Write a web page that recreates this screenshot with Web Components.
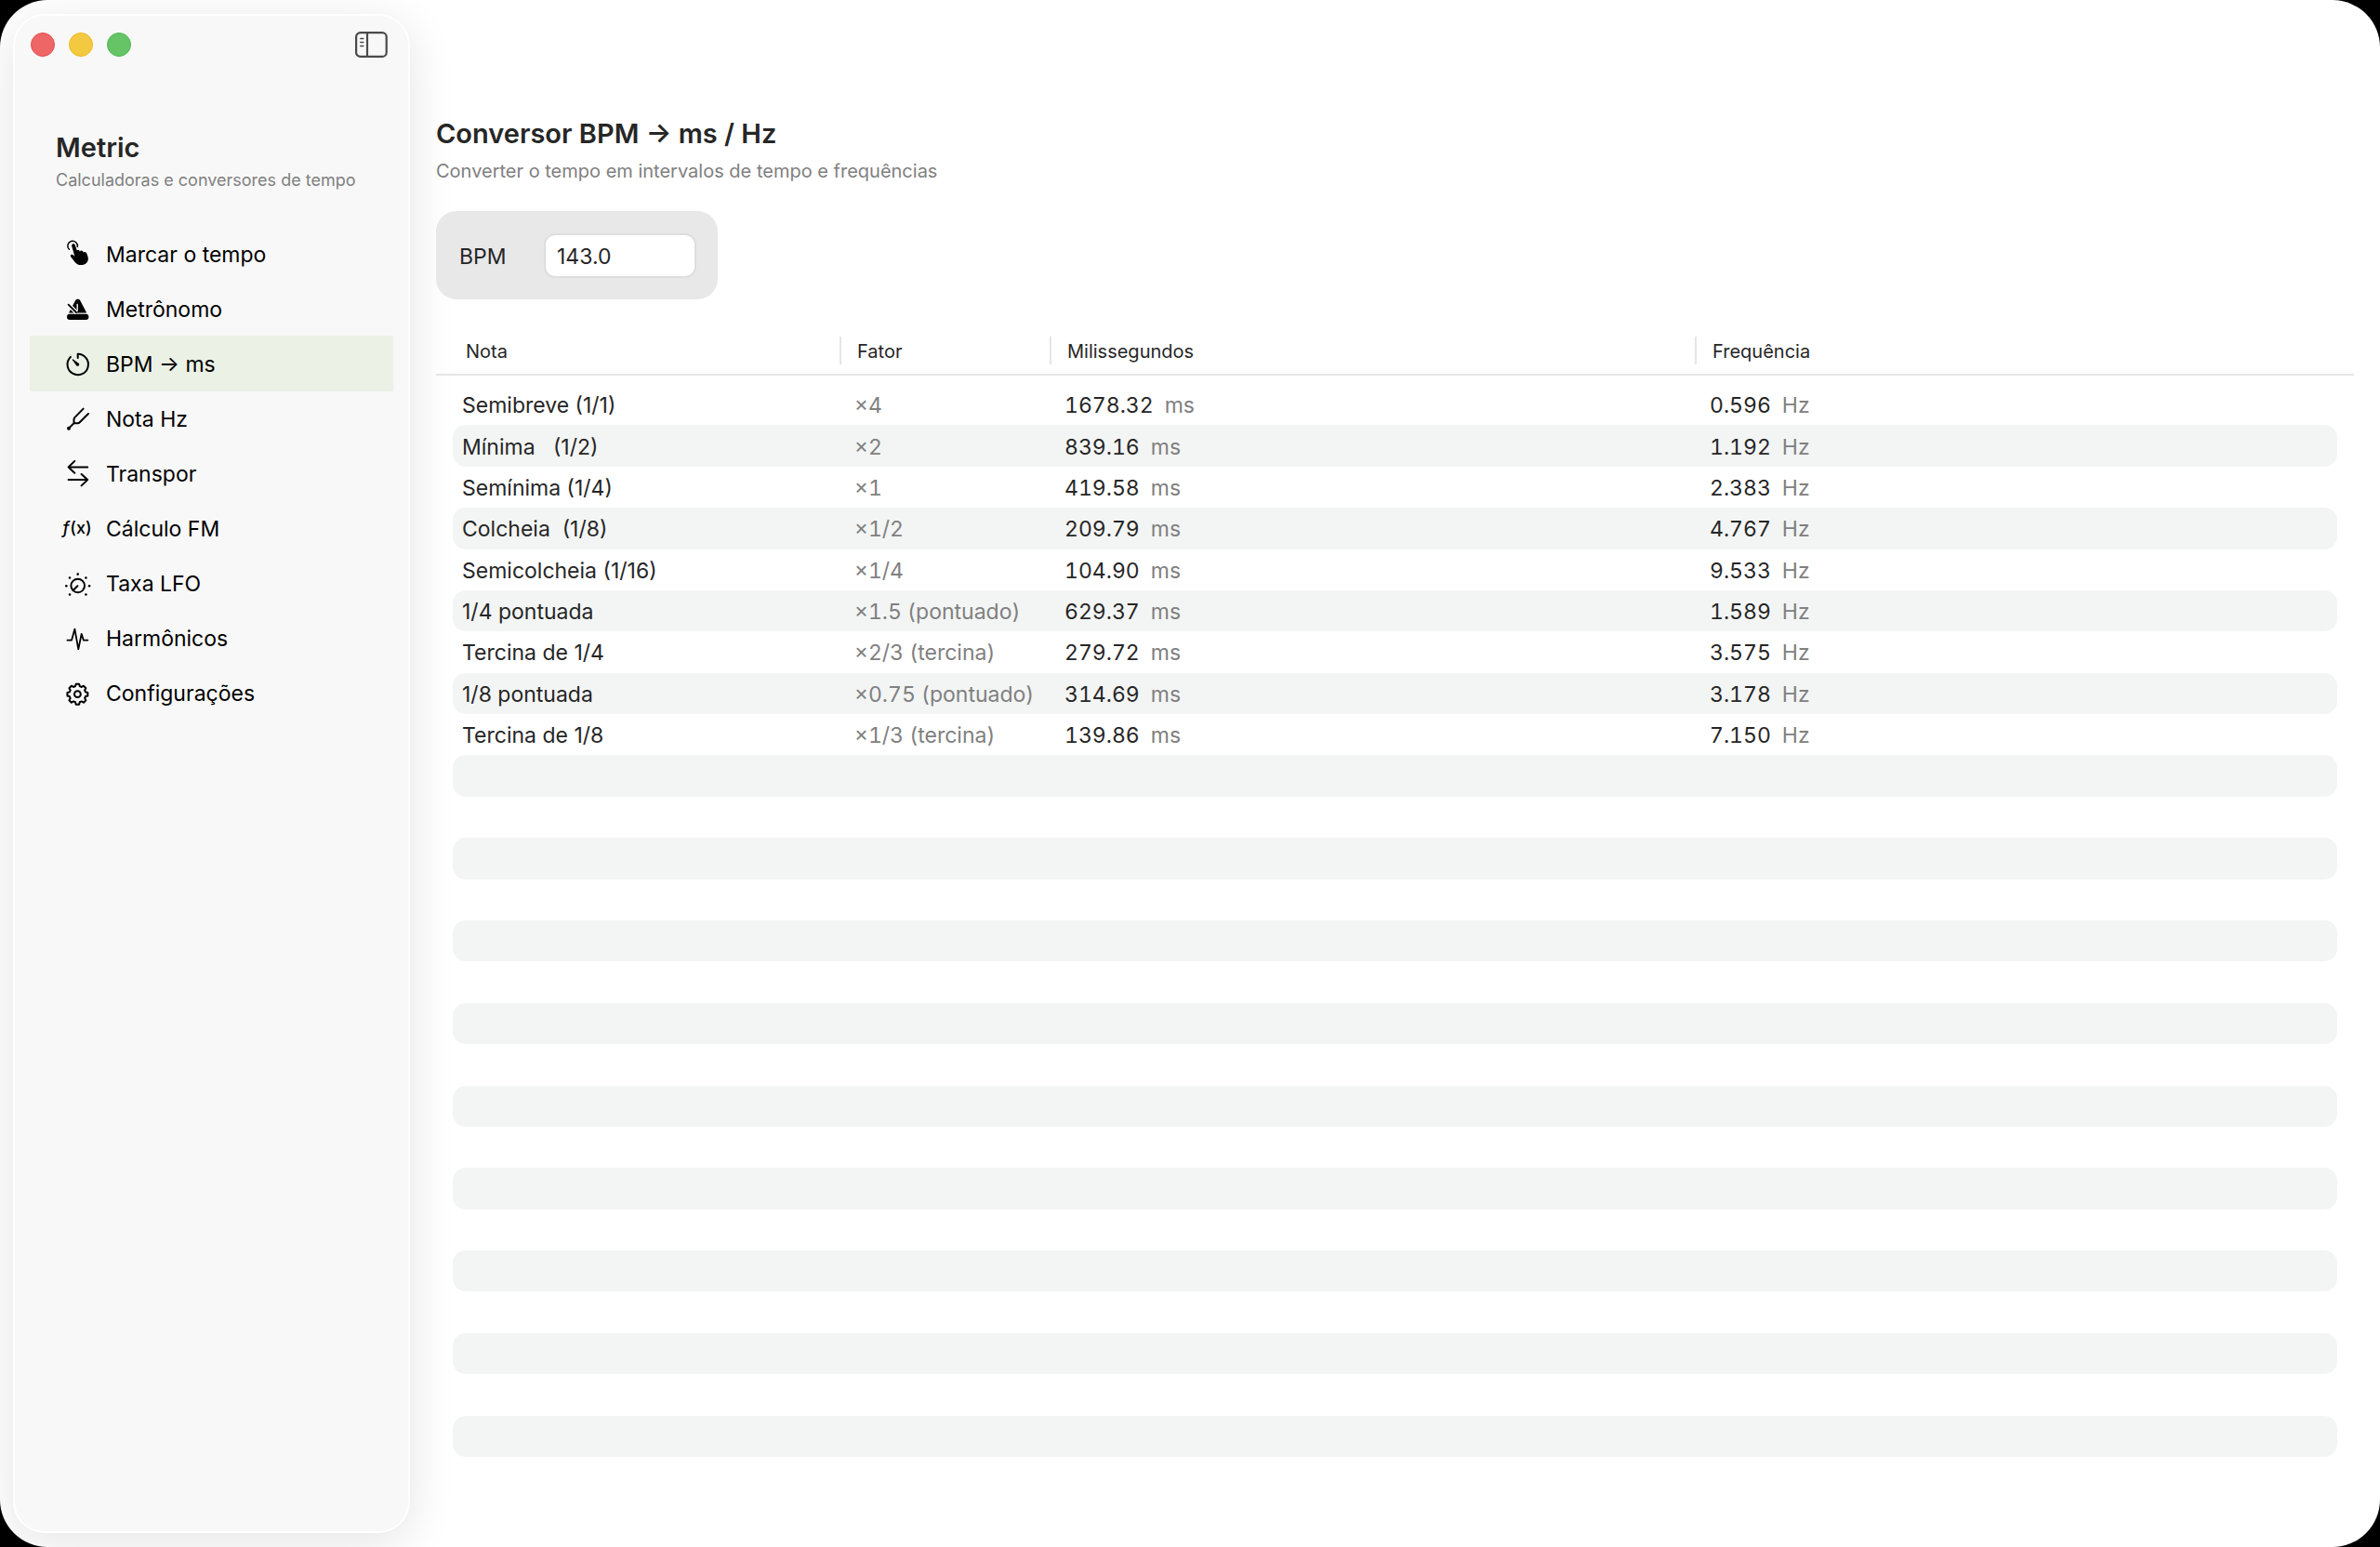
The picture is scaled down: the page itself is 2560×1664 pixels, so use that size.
<!DOCTYPE html>
<html lang="pt-BR">
<head>
<meta charset="utf-8">
<title>Metric</title>
<style>
  html, body { height: 100%; margin: 0; background: #000; }
  body { font-family: Inter, "Liberation Sans", sans-serif; font-size: 23px; color: #262626; }
</style>
</head>
<body>
<metric-app>
  <metric-sidebar slot="sidebar">
    <page-heading slot="heading" compact>
      Metric
      <span slot="subtitle">Calculadoras e conversores de tempo</span>
    </page-heading>
    <nav-item icon="tap">Marcar o tempo</nav-item>
    <nav-item icon="metronome">Metrônomo</nav-item>
    <nav-item icon="timer" selected>BPM → ms</nav-item>
    <nav-item icon="fork">Nota Hz</nav-item>
    <nav-item icon="swap">Transpor</nav-item>
    <nav-item icon="fx">Cálculo FM</nav-item>
    <nav-item icon="dial">Taxa LFO</nav-item>
    <nav-item icon="wave">Harmônicos</nav-item>
    <nav-item icon="gear">Configurações</nav-item>
  </metric-sidebar>
  <page-heading>
    Conversor BPM → ms / Hz
    <span slot="subtitle">Converter o tempo em intervalos de tempo e frequências</span>
  </page-heading>
  <bpm-field value="143.0">BPM</bpm-field>
  <note-table></note-table>
</metric-app>

<script>
const gearPath = (cx, cy, teeth, outer, inner) => {
  const points = [];
  const step = 2 * Math.PI / teeth;
  for (let i = 0; i < teeth; i++) {
    const a = i * step - Math.PI / 2;
    for (const [offset, r] of [[-0.34, inner], [-0.2, outer], [0.2, outer], [0.34, inner]]) {
      const t = a + offset * step;
      points.push((cx + r * Math.cos(t)).toFixed(2) + ' ' + (cy + r * Math.sin(t)).toFixed(2));
    }
  }
  return 'M' + points.join('L') + 'Z';
};

const svg = body => `<svg viewBox="0 0 32 32" fill="none" stroke="currentColor" stroke-width="2" stroke-linecap="round" stroke-linejoin="round" aria-hidden="true">${body}</svg>`;

const ICONS = {
  tap: svg(`<path stroke-width="1.5" d="M7.4 11.3A5.3 5.3 0 1 1 16.3 8.4"/>
    <path stroke="none" fill="currentColor" d="M10.2 7.8C9.9 6.4 10.5 5.5 11.5 5.2C12.6 5 13.4 5.5 13.8 6.5L15.8 12.4C16.4 11.7 17.8 11.5 18.4 12.5L18.8 13.4C19.8 12.3 21.6 12.2 22.2 13.4L22.7 14.4C24 13.6 25.7 14 26.2 15.6L27.4 18.8C28.8 23 26.8 26.3 23.4 27.5C19.4 28.9 15.6 27.6 13.2 24.4L9.2 19.2C8.4 18 9 17 10 16.8C10.8 16.7 11.5 17 12.2 17.7L13.4 18.8Z"/>`),
  metronome: svg(`<path stroke="none" fill="currentColor" d="M13.8 7.8C14.4 6.4 15.4 5.8 16.6 5.8C17.8 5.8 18.9 6.4 19.5 7.8L26.2 20.4H7Z"/>
    <rect stroke="none" fill="currentColor" x="5" y="21.8" width="23.4" height="6.2" rx="3"/>
    <path stroke="#f8f8f8" stroke-width="4.4" stroke-linecap="butt" d="M5.3 10.3L15.3 20.4"/>
    <path stroke="#f8f8f8" stroke-width="1.4" d="M16.2 11.5V17.5"/>
    <path stroke-width="1.8" d="M6.6 11.6L15 20"/>`),
  timer: svg(`<path d="M16.7 10V5.8A11.2 11.2 0 1 1 8.9 9"/>
    <path stroke="none" fill="currentColor" d="M11.6 11.4L18 15.9A1.9 1.9 0 0 1 15.4 18.5L10.9 12.2C10.5 11.6 11 11 11.6 11.4Z"/>`),
  fork: svg(`<circle cx="7" cy="26.8" r="2" stroke="none" fill="currentColor"/>
    <path d="M7.2 26.4L12.5 21.2V17.2Q12.5 16 13.3 15.1L22.6 5.6M12.5 21.2H16.6Q17.8 21.2 18.7 20.3L28 11"/>`),
  swap: svg(`<path d="M27.2 9.4H6.6M13.3 3L6.6 9.4L13.3 15.7M6.6 23.1H27.2M20.6 17L27.2 23.1L20.6 29.4"/>`),
  fx: `<span class="fx"><i>f</i>(x)</span>`,
  dial: svg(`<circle cx="16.7" cy="19" r="7.3"/><path d="M11.6 24L16.4 19.3"/>
    <g stroke="none" fill="currentColor"><circle cx="16.7" cy="6.6" r="1.3"/><circle cx="8" cy="10.5" r="1.3"/><circle cx="25.4" cy="10.5" r="1.3"/><circle cx="4.3" cy="19.3" r="1.3"/><circle cx="29.1" cy="19.3" r="1.3"/><circle cx="8" cy="28.5" r="1.3"/><circle cx="25.4" cy="28.5" r="1.3"/></g>`),
  wave: svg(`<path stroke-width="1.8" d="M5.4 18.6H10.1L13.4 6.6L17.3 28.4L20.7 11.8L22.8 18.6H27.4"/>`),
  gear: svg(`<path d="${gearPath(16.4, 17.7, 8, 11.1, 8.9)}"/><circle cx="16.4" cy="17.7" r="3.4"/>`)
};

class ShadowElement extends HTMLElement {
  constructor() {
    super();
    this.attachShadow({ mode: 'open' });
  }
  connectedCallback() {
    const template = document.createElement('template');
    template.innerHTML = `<style>*{box-sizing:border-box}${this.styles()}</style>${this.markup()}`;
    this.shadowRoot.replaceChildren(template.content.cloneNode(true));
  }
}

customElements.define('metric-app', class extends ShadowElement {
  styles() { return `
    :host { display: grid; grid-template-columns: auto minmax(0, 1fr); height: 100vh; background: #fff; border-radius: 51px; overflow: hidden; }
    main { display: flex; flex-direction: column; align-items: flex-start; min-height: 0; padding: 126px 28px 97px; }
    ::slotted(note-table) { flex: 1; align-self: stretch; margin-top: 30px; }
    ::slotted(bpm-field) { margin-top: 31px; }`; }
  markup() { return `<slot name="sidebar"></slot><main><slot></slot></main>`; }
});

customElements.define('metric-sidebar', class extends ShadowElement {
  styles() { return `
    :host { display: flex; flex-direction: column; box-sizing: border-box; width: 427px; margin: 15px 0 15px 14px; padding: 16px; border: 2px solid #fff; border-radius: 34px; background: #f8f8f8; box-shadow: 0 10px 50px rgba(0,0,0,.11); color: #000; }
    header { display: flex; align-items: center; height: 30px; padding: 0 6px 0 1px; gap: 15px; }
    button { width: 26px; height: 26px; padding: 0; border: 1px solid; border-radius: 50%; }
    .close { background: #ee6666; border-color: #e64c4c; }
    .minimize { background: #f3c942; border-color: #edb91c; }
    .zoom { background: #66c366; border-color: #4cb84c; }
    .toggle { width: 36px; height: 30px; margin-left: auto; border: 0; border-radius: 0; background: none; color: #4a4a4a; }
    .toggle svg { display: block; width: 36px; height: 30px; }
    ::slotted([slot=heading]) { margin: 78px 0 0 28px; }
    nav { display: flex; flex-direction: column; margin-top: 37px; }`; }
  markup() { return `
    <header>
      <button class="close" aria-label="Fechar"></button>
      <button class="minimize" aria-label="Minimizar"></button>
      <button class="zoom" aria-label="Zoom"></button>
      <button class="toggle" aria-label="Barra lateral"><svg viewBox="0 0 36 30" fill="none" stroke="currentColor" stroke-width="2.2" stroke-linecap="round"><rect x="2.1" y="2.1" width="32.6" height="25.8" rx="4.5"/><path d="M14 2V28"/><path stroke-width="1.5" d="M6.8 8.6H9.8M6.8 12.4H9.8M6.8 16.4H9.8"/></svg></button>
    </header>
    <slot name="heading"></slot>
    <nav><slot></slot></nav>`; }
});

customElements.define('nav-item', class extends ShadowElement {
  styles() { return `
    :host { display: block; margin-bottom: -1px; }
    :host([selected]) { background: #ebf1e5; }
    a { display: flex; align-items: center; gap: 15px; height: 60px; padding-left: 35px; color: inherit; text-decoration: none; }
    .icon { display: flex; align-items: center; justify-content: center; width: 32px; height: 32px; }
    .label { padding-top: 2px; }
    svg { width: 32px; height: 32px; }
    .fx { font-size: 18px; line-height: 24px; font-weight: 500; white-space: nowrap; }
    .fx i { padding-right: 1px; }`; }
  markup() { return `<a href="#"><span class="icon">${ICONS[this.getAttribute('icon')]}</span><span class="label"><slot></slot></span></a>`; }
});

customElements.define('page-heading', class extends ShadowElement {
  styles() { return `
    :host { display: block; color: #262626; }
    h1 { margin: 0; font-size: 29px; line-height: 36px; font-weight: 600; }
    p { margin: 10px 0 0; font-size: 20px; line-height: 24px; color: #808080; }
    :host([compact]) p { margin-top: 5px; font-size: 18px; }`; }
  markup() { return `<h1><slot></slot></h1><p><slot name="subtitle"></slot></p>`; }
});

customElements.define('bpm-field', class extends ShadowElement {
  styles() { return `
    :host { display: flex; align-items: center; box-sizing: border-box; height: 95px; padding: 0 23px 0 25px; border-radius: 22px; background: #e8e8e8; }
    label { width: 91px; padding-top: 2px; }
    input { width: 164px; height: 48px; padding: 2px 12px 0; border: 2px solid #dedede; border-radius: 12px; background: #fff; font: inherit; color: inherit; outline: 0; }`; }
  markup() { return `<label for="bpm"><slot></slot></label><input id="bpm" type="text" inputmode="decimal" value="${this.getAttribute('value')}">`; }
});

const NOTES = [
  ['Semibreve (1/1)', '×4', '1678.32', '0.596'],
  ['Mínima   (1/2)', '×2', '839.16', '1.192'],
  ['Semínima (1/4)', '×1', '419.58', '2.383'],
  ['Colcheia  (1/8)', '×1/2', '209.79', '4.767'],
  ['Semicolcheia (1/16)', '×1/4', '104.90', '9.533'],
  ['1/4 pontuada', '×1.5 (pontuado)', '629.37', '1.589'],
  ['Tercina de 1/4', '×2/3 (tercina)', '279.72', '3.575'],
  ['1/8 pontuada', '×0.75 (pontuado)', '314.69', '3.178'],
  ['Tercina de 1/8', '×1/3 (tercina)', '139.86', '7.150']
];
const VISIBLE_ROWS = 26;

customElements.define('note-table', class extends ShadowElement {
  styles() { return `
    :host { display: flex; min-height: 0; }
    table { flex: 1; display: grid; grid-template-rows: auto minmax(0, 1fr); gap: 9px; }
    tr { display: grid; grid-template-columns: 434px 226px 694px 1fr; align-items: center; }
    thead tr { height: 52px; border-bottom: 2px solid #e5e5e5; }
    th { height: 30px; padding: 2px 0 0 17px; border-left: 2px solid #e5e5e5; font-size: 20px; line-height: 28px; font-weight: 400; text-align: left; }
    th:first-child { padding-left: 30px; border-color: transparent; }
    tbody { display: grid; grid-template-rows: repeat(${VISIBLE_ROWS}, minmax(0, 1fr)); padding: 0 18px; }
    tbody tr { grid-template-columns: 416px 226px 694px 1fr; border-radius: 14px; }
    tbody tr:nth-child(even) { background: #f3f5f4; }
    td { padding: 2px 0 0 16px; white-space: pre; }
    td:first-child { padding-left: 10px; }
    td.muted, .unit { color: #808080; }
    .value { display: flex; gap: 12px; font-variant-numeric: tabular-nums; }
    .muted { font-variant-numeric: tabular-nums; }`; }
  markup() {
    const value = (n, unit) => `<td><span class="value"><span>${n}</span><span class="unit">${unit}</span></span></td>`;
    const rows = Array.from({ length: VISIBLE_ROWS }, (_, i) => {
      const n = NOTES[i];
      return n ? `<tr><td>${n[0]}</td><td class="muted">${n[1]}</td>${value(n[2], 'ms')}${value(n[3], 'Hz')}</tr>` : '<tr></tr>';
    }).join('');
    return `<table><thead><tr><th>Nota</th><th>Fator</th><th>Milissegundos</th><th>Frequência</th></tr></thead><tbody>${rows}</tbody></table>`;
  }
});
</script>
</body>
</html>
